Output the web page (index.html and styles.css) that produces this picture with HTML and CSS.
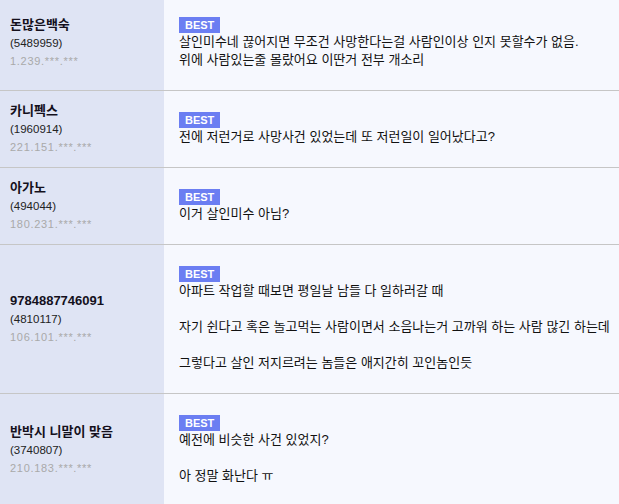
FILE: index.html
```html
<!DOCTYPE html>
<html lang="ko">
<head>
<meta charset="utf-8">
<link rel="stylesheet" href="styles.css">
</head>
<body>
<div class="list">
  <div class="row">
    <div class="who">
      <div class="name">돈많은백숙</div>
      <div class="num">(5489959)</div>
      <div class="ip">1.239.***.***</div>
    </div>
    <div class="body">
      <span class="best">BEST</span>
      <div class="text">살인미수네 끊어지면 무조건 사망한다는걸 사람인이상 인지 못할수가 없음.<br>위에 사람있는줄 몰랐어요 이딴거 전부 개소리</div>
    </div>
  </div>
  <div class="row">
    <div class="who">
      <div class="name">카니펙스</div>
      <div class="num">(1960914)</div>
      <div class="ip">221.151.***.***</div>
    </div>
    <div class="body">
      <span class="best">BEST</span>
      <div class="text">전에 저런거로 사망사건 있었는데 또 저런일이 일어났다고?</div>
    </div>
  </div>
  <div class="row">
    <div class="who">
      <div class="name">아가노</div>
      <div class="num">(494044)</div>
      <div class="ip">180.231.***.***</div>
    </div>
    <div class="body">
      <span class="best">BEST</span>
      <div class="text">이거 살인미수 아님?</div>
    </div>
  </div>
  <div class="row">
    <div class="who">
      <div class="name">9784887746091</div>
      <div class="num">(4810117)</div>
      <div class="ip">106.101.***.***</div>
    </div>
    <div class="body">
      <span class="best">BEST</span>
      <div class="text">아파트 작업할 때보면 평일날 남들 다 일하러갈 때<br><br>자기 쉰다고 혹은 놀고먹는 사람이면서 소음나는거 고까워 하는 사람 많긴 하는데<br><br>그렇다고 살인 저지르려는 놈들은 애지간히 꼬인놈인듯</div>
    </div>
  </div>
  <div class="row">
    <div class="who">
      <div class="name">반박시 니말이 맞음</div>
      <div class="num">(3740807)</div>
      <div class="ip">210.183.***.***</div>
    </div>
    <div class="body">
      <span class="best">BEST</span>
      <div class="text">예전에 비슷한 사건 있었지?<br><br>아 정말 화난다 ㅠ</div>
    </div>
  </div>
</div>
</body>
</html>
```

FILE: styles.css
```css
html, body {
  margin: 0;
  padding: 0;
  background: #f6f8fe;
}
body {
  font-family: "Liberation Sans", "Noto Sans CJK KR", sans-serif;
  font-size: 13px;
  line-height: 18px;
  color: #111;
  overflow: hidden;
}
.list {
  margin-top: -4px;
}
.row {
  display: flex;
  border-bottom: 1px solid #c6c6c6;
}
.who {
  width: 154px;
  flex: none;
  padding-left: 10px;
  background: #dfe4f4;
  display: flex;
  flex-direction: column;
  justify-content: center;
}
.name {
  font-weight: bold;
  color: #14101c;
  height: 18px;
}
.num {
  color: #222;
  font-size: 11.5px;
  height: 18px;
}
.ip {
  color: #a9a9a9;
  font-size: 11px;
  letter-spacing: 0.7px;
  height: 18px;
}
.body {
  flex: 1;
  padding: 21px 0 21px 15px;
}
.best {
  display: block;
  width: fit-content;
  height: 16px;
  line-height: 16px;
  padding: 0 6px;
  background: #6b7ef2;
  color: #fff;
  font-weight: bold;
  font-size: 11px;
}
.text {
  color: #111;
  white-space: nowrap;
}
```
